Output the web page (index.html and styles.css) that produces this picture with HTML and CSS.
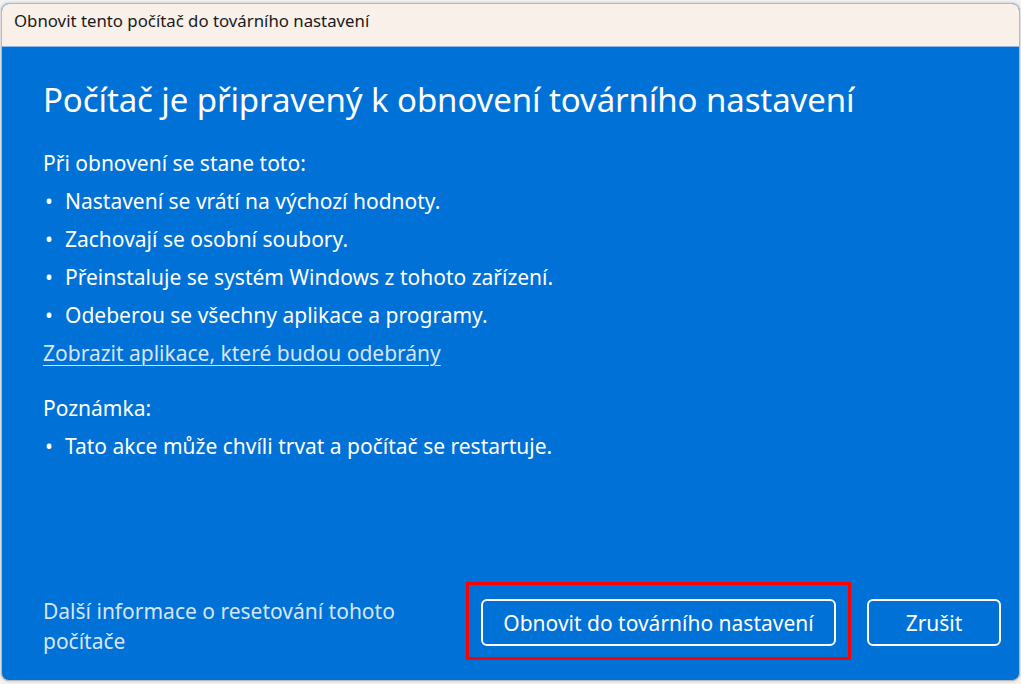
FILE: index.html
```html
<!DOCTYPE html>
<html lang="cs">
<head>
    <meta charset="UTF-8">
    <title>Obnovit tento počítač</title>
    <link rel="stylesheet" href="styles.css">
</head>
<body>
    <div class="reset-dialog">
        <div class="title-bar">Obnovit tento počítač do továrního nastavení</div>
        <div class="dialog-content">
            <h1>Počítač je připravený k obnovení továrního nastavení</h1>
            <p class="section-label">Při obnovení se stane toto:</p>
            <ul class="bullet-list">
                <li>Nastavení se vrátí na výchozí hodnoty.</li>
                <li>Zachovají se osobní soubory.</li>
                <li>Přeinstaluje se systém Windows z tohoto zařízení.</li>
                <li>Odeberou se všechny aplikace a programy.</li>
            </ul>
            <a href="#" class="apps-link">Zobrazit aplikace, které budou odebrány</a>
            <p class="section-label note-label">Poznámka:</p>
            <ul class="bullet-list">
                <li>Tato akce může chvíli trvat a počítač se restartuje.</li>
            </ul>
        </div>
        <div class="dialog-footer">
            <a href="#" class="more-info">Další informace o resetování tohoto počítače</a>
            <div class="footer-buttons">
                <div class="highlight-box">
                    <button class="dialog-btn primary-btn">Obnovit do továrního nastavení</button>
                </div>
                <button class="dialog-btn cancel-btn">Zrušit</button>
            </div>
        </div>
    </div>
</body>
</html>
```

FILE: styles.css
```css
* {
    margin: 0;
    padding: 0;
    box-sizing: border-box;
    font-family: 'Noto Sans', 'Open Sans', sans-serif;
}

body {
    background-color: #f3f3f3;
    height: 684px;
    overflow: hidden;
}

.reset-dialog {
    margin: 3px 1px 0 1px;
    height: 678px;
    background-color: #0071d6;
    border: 1px solid #b9b9b9;
    border-radius: 8px;
    overflow: hidden;
    display: flex;
    flex-direction: column;
    box-shadow: 0 0 3px rgba(0, 0, 0, 0.25);
}

.title-bar {
    height: 43px;
    background-color: #f9f0ea;
    border-bottom: 1px solid #8fb8e4;
    color: #1a1a1a;
    font-size: 16.8px;
    padding: 5px 0 0 12px;
}

.dialog-content {
    flex: 1;
    padding: 31px 0 0 41px;
    color: #ffffff;
}

h1 {
    font-size: 33px;
    font-weight: 400;
    line-height: 44px;
    margin-bottom: 22px;
    letter-spacing: -0.1px;
}

.section-label,
.bullet-list li {
    font-size: 21px;
    line-height: 38px;
}

.bullet-list {
    list-style: none;
}

.bullet-list li {
    display: flex;
}

.bullet-list li::before {
    content: '•';
    width: 20px;
    padding-left: 2px;
}

.apps-link {
    display: block;
    color: #d4e6f8;
    font-size: 21px;
    line-height: 38px;
    text-decoration: underline;
    text-underline-offset: 4px;
    text-decoration-thickness: 1px;
}

.note-label {
    margin-top: 17px;
}

.dialog-footer {
    display: flex;
    justify-content: space-between;
    align-items: center;
    padding: 0 18px 20px 41px;
}

.more-info {
    color: #d4e6f8;
    font-size: 21px;
    line-height: 30px;
    text-decoration: none;
    width: 400px;
    padding-top: 10px;
}

.footer-buttons {
    display: flex;
    align-items: flex-start;
    gap: 16px;
}

.highlight-box {
    border: 3px solid #ff0000;
    padding: 14px 12px 11px 12px;
}

.dialog-btn {
    height: 47px;
    background-color: #0071d6;
    color: #ffffff;
    border: 2px solid #ffffff;
    border-radius: 6px;
    font-size: 21px;
}

.primary-btn {
    width: 355px;
}

.cancel-btn {
    width: 134px;
    margin-top: 17px;
}
```
